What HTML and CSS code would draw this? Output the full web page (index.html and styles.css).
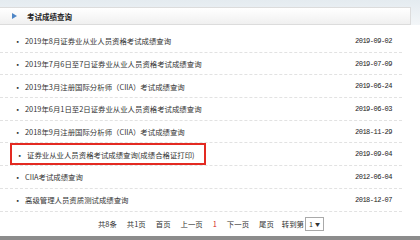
FILE: index.html
```html
<!DOCTYPE html>
<html>
  <head>
    <title>考试成绩查询</title>
    <meta charset="utf-8" />
    <link rel="stylesheet" href="styles.css">
  </head>
  <body>
    <div class="top">
      <div class="panel-head">
        <span class="arrow"></span>
        <h2>考试成绩查询</h2>
      </div>
    </div>
    <ul class="list">
      <li><span class="item"><span class="dot">·</span><a href="#">2019年8月证券业从业人员资格考试成绩查询</a></span><span class="date">2019-09-02</span></li>
      <li><span class="item"><span class="dot">·</span><a href="#">2019年7月6日至7日证券业从业人员资格考试成绩查询</a></span><span class="date">2019-07-09</span></li>
      <li><span class="item"><span class="dot">·</span><a href="#">2019年3月注册国际分析师（CIIA）考试成绩查询</a></span><span class="date">2019-06-24</span></li>
      <li><span class="item"><span class="dot">·</span><a href="#">2019年6月1日至2日证券业从业人员资格考试成绩查询</a></span><span class="date">2019-06-03</span></li>
      <li><span class="item"><span class="dot">·</span><a href="#">2018年9月注册国际分析师（CIIA）考试成绩查询</a></span><span class="date">2018-11-29</span></li>
      <li><span class="item mark"><span class="dot">·</span><a href="#">证券业从业人员资格考试成绩查询(成绩合格证打印)</a></span><span class="date">2019-09-04</span></li>
      <li><span class="item"><span class="dot">·</span><a href="#">CIIA考试成绩查询</a></span><span class="date">2012-06-04</span></li>
      <li><span class="item"><span class="dot">·</span><a href="#">高级管理人员资质测试成绩查询</a></span><span class="date">2018-12-07</span></li>
    </ul>
    <div class="pager">
      <span>共8条</span>
      <span>共1页</span>
      <a href="#">首页</a>
      <a href="#">上一页</a>
      <span class="cur">1</span>
      <a href="#">下一页</a>
      <a href="#">尾页</a>
      <span class="jump">转到第<span class="sel">1 <i>▼</i></span></span>
    </div>
    <div class="foot"></div>
  </body>
</html>
```

FILE: styles.css
```css
*{
  box-sizing:border-box;
}
body{
  margin:0;
  font-family:"Noto Sans CJK SC", sans-serif;
  font-size:7.4px;
  color:#333;
  background:#fff;
}
a{
  color:#333;
  text-decoration:none;
}
.top{
  padding:7px 9px 0 0;
  background:linear-gradient(#e4ebf0, #f3f6f8);
}
.panel-head{
  height:18px;
  display:flex;
  align-items:center;
  border:1px solid #dcdcdc;
  border-left:0;
  background:linear-gradient(#fff, #f0f0f0);
}
.arrow{
  width:0;
  height:0;
  margin-left:12px;
  border-top:3px solid transparent;
  border-bottom:3px solid transparent;
  border-left:5px solid #4f86c6;
}
.panel-head h2{
  margin:0 0 0 10px;
  font-size:7.5px;
  font-weight:bold;
  color:#222;
}
.list{
  list-style:none;
  margin:5px 18px 0 0;
  padding:0;
}
.list li{
  height:22.7px;
  display:flex;
  align-items:center;
  justify-content:space-between;
  border-bottom:1px dashed #e2e2e2;
  padding-right:10px;
}
.item{
  height:100%;
  display:flex;
  align-items:center;
  padding-left:14px;
}
.dot{
  width:11px;
  font-weight:bold;
}
.mark{
  margin-left:10px;
  padding-left:4px;
  padding-right:9px;
  border:2px solid #e32a22;
}
.date{
  font-family:"Liberation Mono", monospace;
  font-size:7px;
  letter-spacing:-0.5px;
  color:#222;
}
.pager{
  height:24px;
  display:flex;
  align-items:center;
  justify-content:center;
  gap:10px;
  padding-left:2px;
}
.pager .cur{
  color:#d42020;
}
.jump{
  display:flex;
  align-items:center;
  margin-left:-2px;
}
.sel{
  height:14px;
  width:19px;
  margin-left:1px;
  padding-left:3px;
  display:flex;
  align-items:center;
  border:1px solid #a9a9a9;
  background:#fff;
  font-size:7px;
}
.sel i{
  font-style:normal;
  font-size:5px;
  margin-left:2px;
}
.foot{
  height:4px;
  background:#8c8c8c;
}
```
